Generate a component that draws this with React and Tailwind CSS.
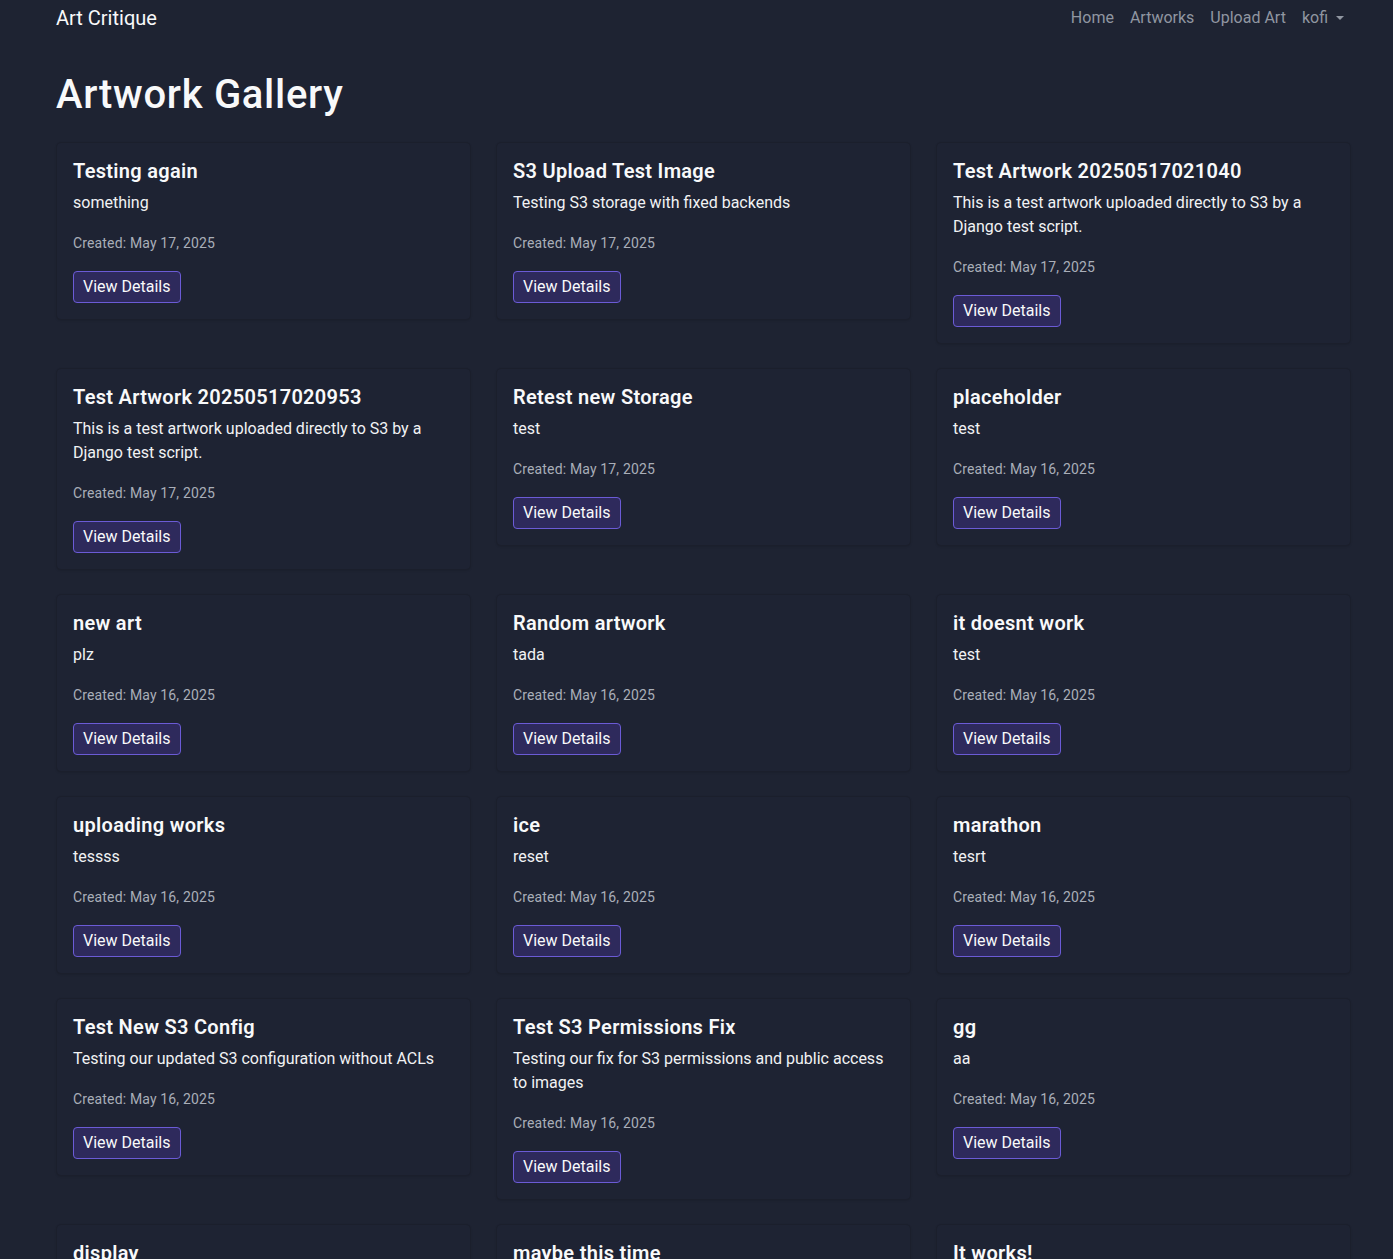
import React from 'react';

const artworks = [
  { title: 'Testing again', description: 'something', created: 'May 17, 2025' },
  { title: 'S3 Upload Test Image', description: 'Testing S3 storage with fixed backends', created: 'May 17, 2025' },
  { title: 'Test Artwork 20250517021040', description: 'This is a test artwork uploaded directly to S3 by a Django test script.', created: 'May 17, 2025' },
  { title: 'Test Artwork 20250517020953', description: 'This is a test artwork uploaded directly to S3 by a Django test script.', created: 'May 17, 2025' },
  { title: 'Retest new Storage', description: 'test', created: 'May 17, 2025' },
  { title: 'placeholder', description: 'test', created: 'May 16, 2025' },
  { title: 'new art', description: 'plz', created: 'May 16, 2025' },
  { title: 'Random artwork', description: 'tada', created: 'May 16, 2025' },
  { title: 'it doesnt work', description: 'test', created: 'May 16, 2025' },
  { title: 'uploading works', description: 'tessss', created: 'May 16, 2025' },
  { title: 'ice', description: 'reset', created: 'May 16, 2025' },
  { title: 'marathon', description: 'tesrt', created: 'May 16, 2025' },
  { title: 'Test New S3 Config', description: 'Testing our updated S3 configuration without ACLs', created: 'May 16, 2025' },
  { title: 'Test S3 Permissions Fix', description: 'Testing our fix for S3 permissions and public access to images', created: 'May 16, 2025' },
  { title: 'gg', description: 'aa', created: 'May 16, 2025' },
  { title: 'display', description: 'display', created: 'May 16, 2025' },
  { title: 'maybe this time', description: 'please', created: 'May 16, 2025' },
  { title: 'It works!', description: 'finally', created: 'May 16, 2025' },
];

const ArtworkCard = ({ title, description, created }) => (
  <div className="rounded-[5px] border border-[#1b1f2c] bg-[#1e2333] px-4 pt-4 pb-4 shadow-[0_1px_2px_rgba(0,0,0,0.1)]">
    <h5 className="mb-2 text-[20px] font-semibold leading-[24px] tracking-[0.3px] text-[#f8f9fa]">{title}</h5>
    <p className="mb-4 text-[16px] leading-[24px] text-[#f1f2f4]">{description}</p>
    <p className="mb-4 text-[16px] leading-[24px]">
      <small className="text-[14px] tracking-[0.15px] text-[#a9aeb8]">Created: {created}</small>
    </p>
    <button className="h-[32px] rounded-[4px] border border-[#6b5bd6] bg-[#2e2a5c] px-[9px] text-[16px] leading-[30px] text-[#f8f9fa]">
      View Details
    </button>
  </div>
);

export default function App() {
  return (
    <div className="min-h-screen bg-[#1e2332] font-['Roboto',sans-serif] text-[#f8f9fa]">
      <nav className="flex h-[35px] items-center justify-between pl-[56px] pr-[49px]">
        <a className="text-[20px] leading-[30px] text-[#f8f9fa]">Art Critique</a>
        <ul className="flex items-center gap-4 text-[16px] text-[#9096a1]">
          <li>Home</li>
          <li>Artworks</li>
          <li>Upload Art</li>
          <li className="flex items-center gap-2">
            kofi
            <span className="inline-block h-0 w-0 border-x-[4px] border-t-[4px] border-x-transparent border-t-[#9096a1]" />
          </li>
        </ul>
      </nav>
      <main className="pl-[56px] pt-[36px]">
        <h1 className="mb-[23px] text-[40px] font-medium leading-[48px] tracking-[0.7px] text-[#f8f9fa]">Artwork Gallery</h1>
        <div className="grid grid-cols-[415px_415px_415px] items-start gap-x-[25px] gap-y-6">
          {artworks.map((art, i) => (
            <ArtworkCard key={i} {...art} />
          ))}
        </div>
      </main>
    </div>
  );
}
